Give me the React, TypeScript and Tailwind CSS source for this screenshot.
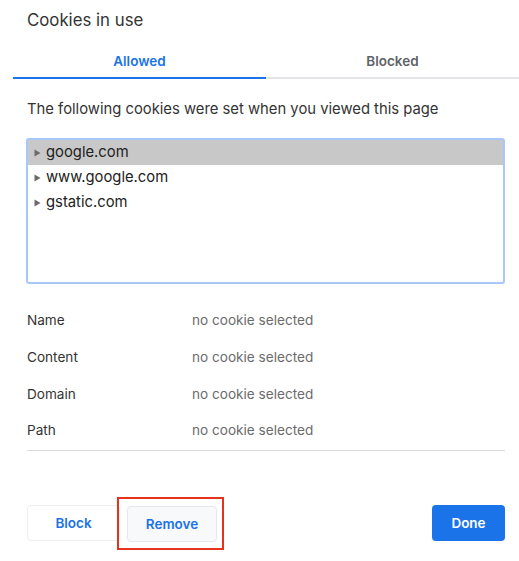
import React, { useState } from 'react';

const sites = ['google.com', 'www.google.com', 'gstatic.com'];
const fields = ['Name', 'Content', 'Domain', 'Path'];

export default function App() {
  const [tab, setTab] = useState<'allowed' | 'blocked'>('allowed');
  const [selected, setSelected] = useState(0);

  return (
    <div
      className="w-[519px] h-[561px] bg-white overflow-hidden text-[#333]"
      style={{ fontFamily: 'Inter, "Liberation Sans", sans-serif' }}
    >
      <div className="h-[40px] pl-[27px] pt-[8px] text-[16.8px] leading-[24px] text-[#333]">
        Cookies in use
      </div>

      {/* tabs */}
      <div className="ml-[13px] flex h-[39px]">
        {(['allowed', 'blocked'] as const).map((t) => (
          <button
            key={t}
            onClick={() => setTab(t)}
            className={`flex-1 flex items-center justify-center pt-[5px] text-[13.5px] font-semibold border-b-2 ${
              tab === t ? 'text-[#1a73e8] border-[#1a73e8]' : 'text-[#5f6368] border-[#e3e4e8]'
            }`}
          >
            {t === 'allowed' ? 'Allowed' : 'Blocked'}
          </button>
        ))}
      </div>

      <div className="pl-[27px] pr-[14px]">
        <p className="mt-[20px] text-[14.8px] leading-[20px] text-[#333]">
          The following cookies were set when you viewed this page
        </p>

        <div className="mt-[19px] h-[146px] border-2 border-[#a8c7fa] rounded-[3px] -ml-[1px]">
          {sites.map((s, i) => (
            <div
              key={s}
              onClick={() => setSelected(i)}
              className={`h-[25px] flex items-center pl-[6px] text-[14.8px] text-[#222] ${
                selected === i ? 'bg-[#c8c8c8]' : ''
              }`}
            >
              <svg width="7" height="8" viewBox="0 0 7 8" className="mr-[5px] fill-[#6b6b6b]">
                <path d="M0.5 0.5 L6.5 4 L0.5 7.5 Z" />
              </svg>
              {s}
            </div>
          ))}
        </div>

        <div className="mt-[18px]">
          {fields.map((f) => (
            <div key={f} className="h-[36.7px] flex items-center text-[13.6px]">
              <span className="w-[165px] text-[#333]">{f}</span>
              <span className="text-[#6b6b6b]">no cookie selected</span>
            </div>
          ))}
        </div>

        <div className="mt-[1px] border-t border-[#dadce0]" />

        <div className="mt-[46px] flex items-center">
          <button className="w-[93px] h-[36px] rounded-[4px] border border-[#eeeff1] text-[13.5px] font-semibold text-[#1a73e8] bg-white">
            Block
          </button>
          <div className="ml-[-3px] pt-[7px] pb-[6px] pl-[8px] pr-[5px] border-2 border-[#e8321e]">
            <button className="block w-[90px] h-[36px] rounded-[4px] border border-[#e6e7ea] bg-[#f8f9fa] text-[13.5px] font-semibold text-[#1a73e8]">
              Remove
            </button>
          </div>
          <div className="flex-1" />
          <button className="w-[73px] h-[36px] rounded-[4px] bg-[#1a73e8] text-white text-[13.5px] font-semibold">
            Done
          </button>
        </div>
      </div>
    </div>
  );
}
